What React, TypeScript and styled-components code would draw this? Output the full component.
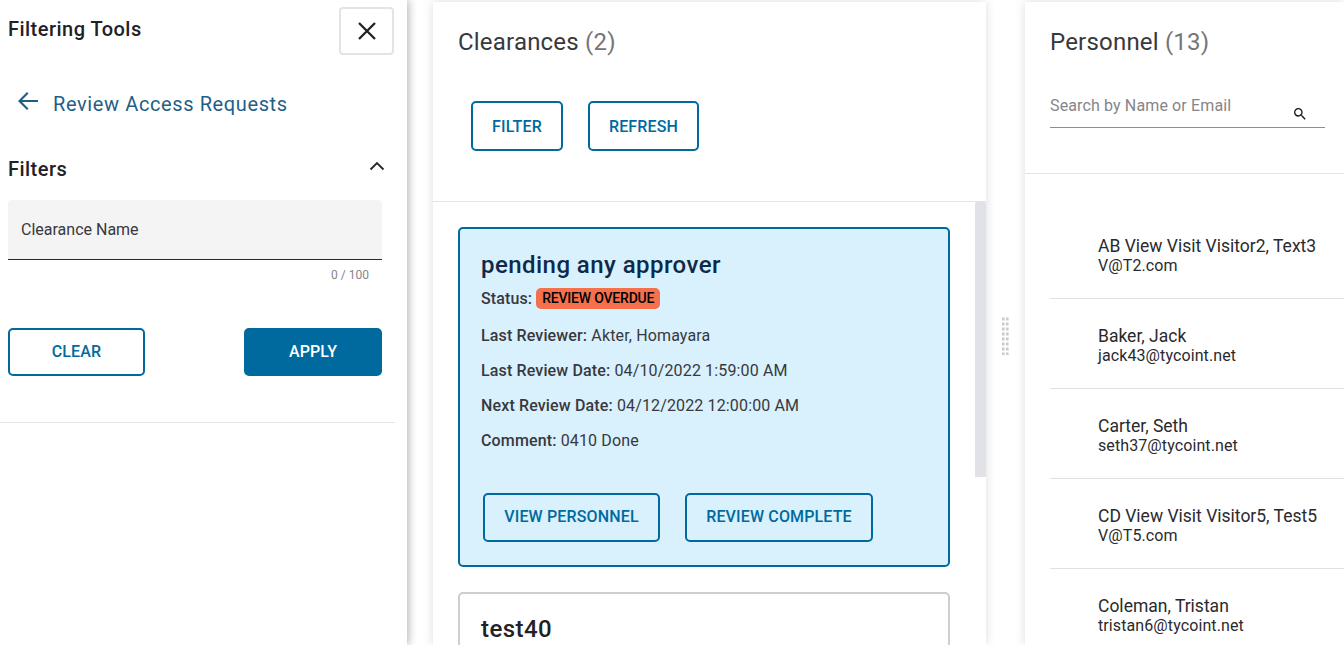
import React from "react";
import styled, { createGlobalStyle } from "styled-components";

const Global = createGlobalStyle`
  html, body { margin: 0; padding: 0; background: #fff; overflow: hidden; }
  * { box-sizing: border-box; }
  body { font-family: Roboto, "Liberation Sans", sans-serif; color: #2a2a2e; }
`;

const Page = styled.div`
  display: flex;
  width: 1344px;
  height: 645px;
  overflow: hidden;
  background: #fff;
`;

const Sidebar = styled.aside`
  flex: 0 0 407px;
  height: 645px;
  background: #fff;
  box-shadow: 2px 0 8px rgba(0, 0, 0, 0.28);
  padding-top: 8px;
  margin-right: 26px;
  position: relative;
  z-index: 2;
`;

const SideHeader = styled.div`
  display: flex;
  justify-content: space-between;
  align-items: flex-start;
  padding: 0 13px 0 8px;
  height: 48px;
`;

const SideTitle = styled.h2`
  margin: 9px 0 0;
  font-size: 20px;
  line-height: 24px;
  font-weight: 500;
  letter-spacing: 0.47px;
  color: #212126;
`;

const CloseButton = styled.button`
  width: 55px;
  height: 48px;
  margin-top: -1px;
  padding: 0;
  background: #fff;
  border: 2px solid #e4e4e6;
  border-radius: 4px;
  display: flex;
  align-items: center;
  justify-content: center;
`;

const BackRow = styled.div`
  display: flex;
  align-items: center;
  height: 32px;
  margin-top: 32px;
  padding-left: 17px;
  gap: 14px;
  font-size: 20px;
  letter-spacing: 0.61px;
  color: #1f5f85;
`;

const BackArrow = styled.svg`
  width: 22px;
  height: 22px;
  margin-bottom: 6px;
`;

const FiltersRow = styled.div`
  display: flex;
  justify-content: space-between;
  align-items: center;
  height: 24px;
  margin-top: 37px;
  padding: 0 22px 0 8px;
`;

const FiltersTitle = styled.h3`
  margin: 0;
  font-size: 20px;
  line-height: 24px;
  font-weight: 500;
  letter-spacing: 0.47px;
  color: #212126;
`;

const Chevron = styled.svg`
  width: 16px;
  height: 10px;
  margin-bottom: 6px;
`;

const Field = styled.div`
  margin: 19px 25px 0 8px;
  height: 60px;
  background: #f4f4f4;
  border-bottom: 1px solid #2a2a2e;
  border-radius: 4px 4px 0 0;
  padding: 0 13px;
  display: flex;
  align-items: center;
  font-size: 16px;
  color: #38383d;
`;

const Counter = styled.div`
  margin: 8px 38px 0 0;
  text-align: right;
  font-size: 12px;
  line-height: 14px;
  color: #85858a;
`;

const SideActions = styled.div`
  display: flex;
  justify-content: space-between;
  padding: 0 25px 0 8px;
  margin-top: 46px;
`;

const OutlineButton = styled.button<{ $w: number; $h?: number }>`
  width: ${(p) => p.$w}px;
  height: ${(p) => p.$h ?? 48}px;
  padding: 0 0 ${(p) => (p.$h === 50 ? 0 : 2)}px;
  background: transparent;
  border: 2px solid #006a9e;
  border-radius: 5px;
  color: #006a9e;
  font-family: inherit;
  font-size: 16px;
  font-weight: 500;
  letter-spacing: 0.15px;
`;

const FilledButton = styled(OutlineButton)`
  background: #006a9e;
  color: #fff;
`;

const SideDivider = styled.div`
  margin-top: 46px;
  width: 395px;
  height: 1px;
  background: #e4e4e6;
`;

const ClearancesPanel = styled.section`
  flex: 0 0 553px;
  height: 643px;
  margin-top: 2px;
  background: #fff;
  box-shadow: 0 0 10px rgba(0, 0, 0, 0.14);
  display: flex;
  flex-direction: column;
  clip-path: inset(-20px -20px 0 -20px);
`;

const PanelTitle = styled.h2`
  margin: 0;
  font-size: 24px;
  line-height: 28px;
  font-weight: 400;
  letter-spacing: 0.2px;
  color: #38383d;
`;

const Count = styled.span`
  color: #75757a;
`;

const ClearancesHead = styled.div`
  height: 200px;
  flex: none;
  padding: 26px 25px 0;
  border-bottom: 1px solid #e4e4e6;
`;

const HeadActions = styled.div`
  display: flex;
  gap: 25px;
  margin: 45px 0 0 13px;
`;

const ScrollArea = styled.div`
  flex: 1;
  display: flex;
  min-height: 0;
`;

const CardList = styled.div`
  flex: 1;
  padding: 25px 25px 0;
  display: flex;
  flex-direction: column;
  gap: 25px;
  overflow: hidden;
`;

const Track = styled.div`
  flex: 0 0 11px;
`;

const Thumb = styled.div`
  height: 275px;
  background: #e1e1e8;
  border-radius: 2px 2px 0 0;
`;

const Card = styled.article<{ $active?: boolean }>`
  flex: none;
  width: 492px;
  height: ${(p) => (p.$active ? "340px" : "200px")};
  border: 2px solid ${(p) => (p.$active ? "#006a9e" : "#cdcdd2")};
  border-radius: 5px;
  background: ${(p) => (p.$active ? "#d9f0fd" : "#fff")};
  padding: 21px 21px 0;
`;

const CardTitle = styled.h3<{ $active?: boolean }>`
  margin: ${(p) => (p.$active ? "0" : "-1px 0 0")};
  font-size: 24px;
  line-height: 30px;
  font-weight: 500;
  letter-spacing: 0.45px;
  color: ${(p) => (p.$active ? "#0e2a4a" : "#212126")};
`;

const StatusLine = styled.div`
  display: flex;
  align-items: center;
  gap: 4px;
  height: 20px;
  margin-top: 8px;
  font-size: 16px;
  letter-spacing: 0.12px;
`;

const Strong = styled.strong`
  color: #38383d;
  font-weight: 500;
`;

const Badge = styled.span`
  background: #f5704d;
  color: #000;
  font-size: 14px;
  font-weight: 500;
  line-height: 21px;
  height: 21px;
  padding: 0 6px;
  border-radius: 5px;
  letter-spacing: -0.2px;
`;

const InfoLine = styled.p`
  margin: 15px 0 0;
  font-size: 16px;
  line-height: 20px;
  letter-spacing: 0.14px;
  color: #38383d;
`;

const FirstInfoLine = styled(InfoLine)`
  margin-top: 18px;
`;

const CardActions = styled.div`
  display: flex;
  gap: 25px;
  margin: 42px 0 0 2px;
`;

const Gutter = styled.div`
  flex: 0 0 39px;
  height: 645px;
  display: flex;
  align-items: center;
  justify-content: center;
`;

const Grip = styled.svg`
  width: 7px;
  height: 38px;
  margin-top: 27px;
`;

const PersonnelPanel = styled.section`
  flex: 1;
  height: 643px;
  margin-top: 2px;
  background: #fff;
  box-shadow: 0 0 10px rgba(0, 0, 0, 0.14);
  display: flex;
  flex-direction: column;
  clip-path: inset(-20px 0 0 -20px);
`;

const PersonnelHead = styled.div`
  height: 172px;
  flex: none;
  padding: 26px 19px 0 25px;
  border-bottom: 1px solid #e4e4e6;
`;

const Search = styled.div`
  margin-top: 21px;
  border-bottom: 1px solid #8e8e92;
  display: flex;
  justify-content: space-between;
  font-size: 16px;
  letter-spacing: 0.13px;
  color: #85858a;
  height: 51px;
  padding-top: 19px;
`;

const SearchIcon = styled.svg`
  width: 16px;
  height: 16px;
  margin: 10px 17px 0 0;
`;

const PersonList = styled.ul`
  margin: 0;
  padding: 35px 0 0 25px;
  list-style: none;
`;

const Person = styled.li`
  height: 90px;
  padding: 25px 0 0 48px;
  border-bottom: 1px solid #e1e1e4;
`;

const PersonName = styled.div`
  font-size: 17.5px;
  line-height: 24px;
  color: #2a2a2e;
`;

const PersonMail = styled.div`
  margin-top: -1px;
  font-size: 16px;
  line-height: 17px;
  letter-spacing: 0.1px;
  color: #2a2a2e;
`;

const people = [
  ["AB View Visit Visitor2, Text3", "V@T2.com"],
  ["Baker, Jack", "jack43@tycoint.net"],
  ["Carter, Seth", "seth37@tycoint.net"],
  ["CD View Visit Visitor5, Test5", "V@T5.com"],
  ["Coleman, Tristan", "tristan6@tycoint.net"],
];

export default function App() {
  return (
    <Page>
      <Global />
      <Sidebar>
        <SideHeader>
          <SideTitle>Filtering Tools</SideTitle>
          <CloseButton aria-label="Close">
            <svg width="20" height="20" viewBox="0 0 20 20">
              <path d="M2 2l16 16M18 2 2 18" fill="none" stroke="#1f2024" strokeWidth="2.3" />
            </svg>
          </CloseButton>
        </SideHeader>
        <BackRow>
          <BackArrow viewBox="0 0 22 22">
            <path d="M21 10v2H5l6.5 6.6L10 20 1 11l9-9 1.5 1.4L5 10z" fill="#1f5f85" />
          </BackArrow>
          Review Access Requests
        </BackRow>
        <FiltersRow>
          <FiltersTitle>Filters</FiltersTitle>
          <Chevron viewBox="0 0 16 10">
            <path d="M1.5 8.5 8 2l6.5 6.5" fill="none" stroke="#2a2a2e" strokeWidth="1.9" />
          </Chevron>
        </FiltersRow>
        <Field>Clearance Name</Field>
        <Counter>0 / 100</Counter>
        <SideActions>
          <OutlineButton $w={137}>CLEAR</OutlineButton>
          <FilledButton $w={138}>APPLY</FilledButton>
        </SideActions>
        <SideDivider />
      </Sidebar>

      <ClearancesPanel>
        <ClearancesHead>
          <PanelTitle>
            Clearances <Count>(2)</Count>
          </PanelTitle>
          <HeadActions>
            <OutlineButton $w={92} $h={50}>FILTER</OutlineButton>
            <OutlineButton $w={111} $h={50}>REFRESH</OutlineButton>
          </HeadActions>
        </ClearancesHead>
        <ScrollArea>
          <CardList>
            <Card $active>
              <CardTitle $active>pending any approver</CardTitle>
              <StatusLine>
                <Strong>Status:</Strong>
                <Badge>REVIEW OVERDUE</Badge>
              </StatusLine>
              <FirstInfoLine><Strong>Last Reviewer:</Strong> Akter, Homayara</FirstInfoLine>
              <InfoLine><Strong>Last Review Date:</Strong> 04/10/2022 1:59:00 AM</InfoLine>
              <InfoLine><Strong>Next Review Date:</Strong> 04/12/2022 12:00:00 AM</InfoLine>
              <InfoLine><Strong>Comment:</Strong> 0410 Done</InfoLine>
              <CardActions>
                <OutlineButton $w={177} $h={49}>VIEW PERSONNEL</OutlineButton>
                <OutlineButton $w={188} $h={49}>REVIEW COMPLETE</OutlineButton>
              </CardActions>
            </Card>
            <Card>
              <CardTitle>test40</CardTitle>
            </Card>
          </CardList>
          <Track><Thumb /></Track>
        </ScrollArea>
      </ClearancesPanel>

      <Gutter>
        <Grip viewBox="0 0 7 38">
          {Array.from({ length: 8 }, (_, i) => (
            <path key={i} d={`M0 ${i * 5 + 0.5}h2.6v3H0zM4 ${i * 5 + 0.5}h2.6v3H4z`} fill="#cbcbcd" />
          ))}
        </Grip>
      </Gutter>

      <PersonnelPanel>
        <PersonnelHead>
          <PanelTitle>
            Personnel <Count>(13)</Count>
          </PanelTitle>
          <Search>
            Search by Name or Email
            <SearchIcon viewBox="0 0 24 24">
              <path d="M15.5 14h-.79l-.28-.27A6.47 6.47 0 0 0 16 9.5 6.5 6.5 0 1 0 9.5 16c1.61 0 3.09-.59 4.23-1.57l.27.28v.79l5 4.99L20.49 19zm-6 0C7.01 14 5 11.99 5 9.5S7.01 5 9.5 5 14 7.01 14 9.5 11.99 14 9.5 14z" fill="#15151a" />
            </SearchIcon>
          </Search>
        </PersonnelHead>
        <PersonList>
          {people.map(([name, mail]) => (
            <Person key={mail}>
              <PersonName>{name}</PersonName>
              <PersonMail>{mail}</PersonMail>
            </Person>
          ))}
        </PersonList>
      </PersonnelPanel>
    </Page>
  );
}
